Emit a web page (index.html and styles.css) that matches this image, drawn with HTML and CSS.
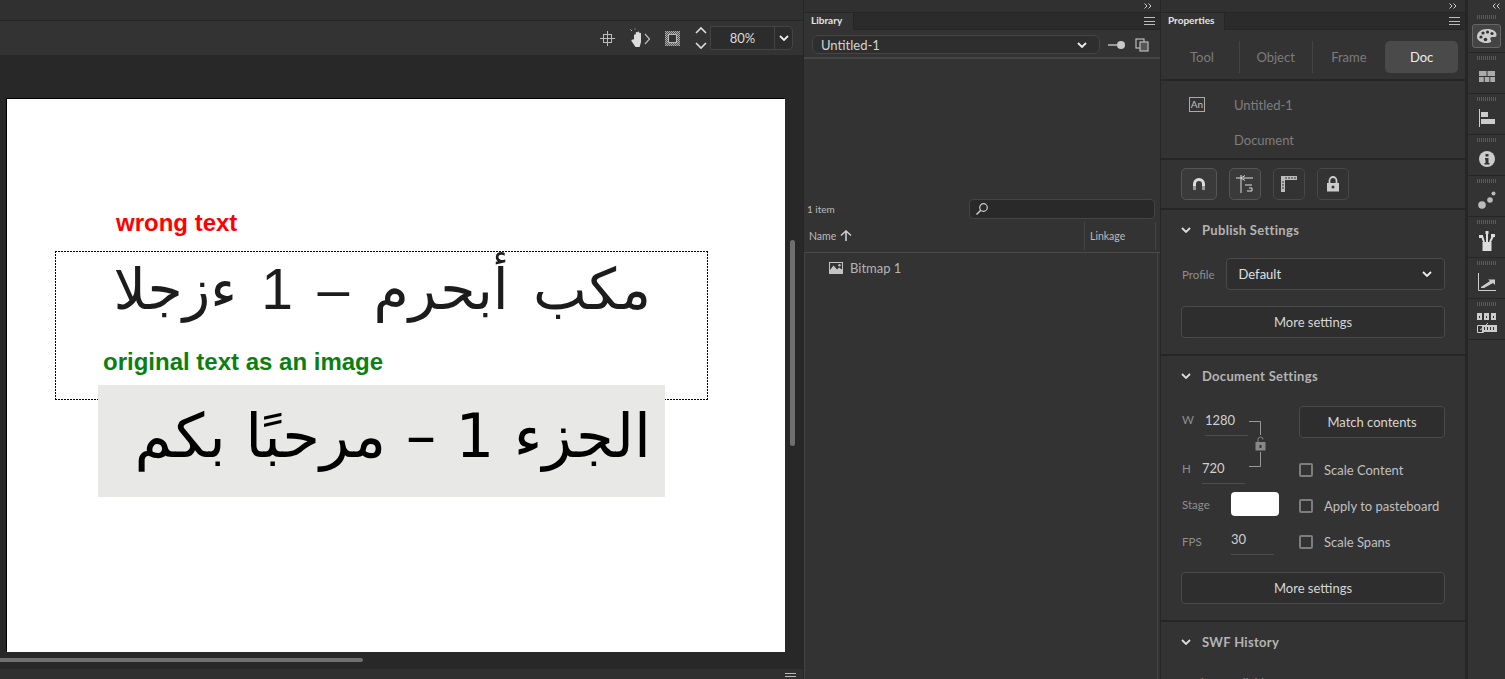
FILE: index.html
```html
<!DOCTYPE html>
<html lang="en">

<head>
    <meta charset="UTF-8">
    <title>Untitled-1</title>
    <link rel="stylesheet" href="styles.css">
</head>

<body>
    <main class="doc">
        <div class="doc-strip"></div>
        <div class="doc-toolbar">
            <svg class="tool-icon" viewBox="0 0 15 15" width="15" height="15"><path d="M7.500 0v15M0 7.500h15" stroke="#bbb" fill="none"/><rect x="3.500" y="3.500" width="8" height="8" stroke="#bbb" fill="none"/></svg>
            <svg class="tool-icon" viewBox="0 0 22 20" width="22" height="20"><path d="M5 11V7a1 1 0 0 1 1.700 0v3V4.500a1 1 0 0 1 1.800 0V10V4a1 1 0 0 1 1.800 0v6V5.500a1 1 0 0 1 1.700 0V14l-1.400 5H6.500L2.500 13c-.5-1 .7-2 1.500-1.200z" fill="#dcdcdc"/><path d="M16 6l4.500 5-4.500 5" stroke="#bbb" stroke-width="1.200" fill="none"/><path d="M3 3L1.500 1.500M6 .5v1" stroke="#bbb"/></svg>
            <svg class="tool-icon" viewBox="0 0 15 15" width="15" height="15">
                <defs><pattern id="hatch" width="2" height="2" patternUnits="userSpaceOnUse"><rect width="2" height="2" fill="#555"/><rect width="1" height="1" fill="#aaa"/><rect x="1" y="1" width="1" height="1" fill="#aaa"/></pattern></defs>
                <rect width="15" height="15" fill="url(#hatch)"/><rect x="3.500" y="3.500" width="8" height="8" fill="#333" stroke="#bbb"/>
            </svg>
            <div class="stepper">
                <svg viewBox="0 0 12 24" width="12" height="24"><path d="M1 7l5-5 5 5M1 17l5 5 5-5" stroke="#ddd" stroke-width="1.600" fill="none"/></svg>
            </div>
            <div class="zoom-box">
                <span class="zoom-value">80%</span>
                <span class="zoom-arrow"><svg viewBox="0 0 10 6" width="10" height="6"><path d="M1 1l4 4 4-4" stroke="#eee" stroke-width="1.800" fill="none"/></svg></span>
            </div>
        </div>
        <div class="canvas">
            <div class="stage">
                <p class="note note-red">wrong text</p>
                <div class="text-box">
                    <p class="wrong-arabic" dir="rtl">مكب أبحرم – 1 ءزجلا</p>
                </div>
                <p class="note note-green">original text as an image</p>
                <div class="picture">
                    <p class="right-arabic" dir="rtl">الجزء 1 – مرحبًا بكم</p>
                </div>
            </div>
            <div class="scroll-v"></div>
            <div class="scroll-h"></div>
        </div>
        <div class="doc-bottom"><span class="menu-lines"></span></div>
    </main>

    <section class="library">
        <div class="strip"><svg class="collapse" viewBox="0 0 8 6" width="8" height="6"><path d="M.5.500L3 3 .5 5.500M4.500.500L7 3 4.500 5.500" stroke="#ccc" fill="none"/></svg></div>
        <div class="tab-bar">
            <span class="tab lib-tab">Library</span>
            <span class="menu-lines"></span>
        </div>
        <div class="lib-doc-row">
            <div class="lib-select">
                <span>Untitled-1</span>
                <svg viewBox="0 0 10 6" width="10" height="6"><path d="M1 1l4 4 4-4" stroke="#eee" stroke-width="1.800" fill="none"/></svg>
            </div>
            <svg viewBox="0 0 18 10" width="18" height="10"><path d="M0 5h9" stroke="#bbb" stroke-width="1.500"/><circle cx="13" cy="5" r="4" fill="#c8c8c8"/></svg>
            <svg viewBox="0 0 14 14" width="14" height="14"><rect x="1" y="1" width="8" height="9" fill="#333" stroke="#bbb" stroke-width="1.200"/><rect x="5" y="4" width="8" height="9" fill="#555" stroke="#bbb" stroke-width="1.200"/></svg>
        </div>
        <div class="lib-preview"></div>
        <div class="lib-count-row">
            <span class="lib-count">1 item</span>
            <div class="lib-search">
                <svg viewBox="0 0 14 14" width="14" height="14"><circle cx="8.500" cy="5.500" r="3.800" stroke="#ccc" stroke-width="1.200" fill="none"/><path d="M5.800 8.200L1.500 12.500" stroke="#ccc" stroke-width="1.500"/></svg>
            </div>
        </div>
        <div class="lib-head">
            <span class="lib-name">Name
                <svg viewBox="0 0 12 11" width="12" height="11"><path d="M6 11V2M1 5.500L6 1l5 4.500" stroke="#ccc" stroke-width="1.600" fill="none"/></svg>
            </span>
            <span class="lib-linkage">Linkage</span>
        </div>
        <div class="lib-list">
            <div class="lib-item">
                <svg viewBox="0 0 14 12" width="14" height="12"><path d="M0 0h14v12H0z" fill="#c4c4c4"/><path d="M1 1h12v6.500L10 5.500 8 7.500 4.500 3.500 1 8z" fill="#333"/><circle cx="10.500" cy="3.200" r="1.200" fill="#c4c4c4"/></svg>
                <span>Bitmap 1</span>
            </div>
        </div>
    </section>

    <section class="props">
        <div class="strip"><svg class="collapse" viewBox="0 0 8 6" width="8" height="6"><path d="M.5.500L3 3 .5 5.500M4.500.500L7 3 4.500 5.500" stroke="#ccc" fill="none"/></svg></div>
        <div class="tab-bar">
            <span class="tab props-tab">Properties</span>
            <span class="menu-lines"></span>
        </div>

        <div class="seg-row">
            <span class="seg seg-tool">Tool</span>
            <span class="seg seg-object">Object</span>
            <span class="seg seg-frame">Frame</span>
            <span class="seg seg-doc">Doc</span>
        </div>

        <div class="block doc-info">
            <span class="an-icon">An</span>
            <div class="doc-names">
                <span>Untitled-1</span>
                <span>Document</span>
            </div>
        </div>

        <div class="block icon-row">
            <span class="icon-btn btn-on"><svg viewBox="0 0 14 14" width="14" height="14"><path d="M2.500 9V7a4.500 4.500 0 0 1 9 0v2" stroke="#ddd" stroke-width="3" fill="none"/><path d="M2.500 9v4M11.500 9v4" stroke="#999" stroke-width="3"/></svg></span>
            <span class="icon-btn btn-on btn-narrow"><svg viewBox="0 0 18 18" width="18" height="18"><path d="M5 0v18M0 3h5M7 3h10M5 3L9 .5M5 3l4 2.500M9 10h7M11 16h5v-3h-3" stroke="#ddd" fill="none"/></svg></span>
            <span class="icon-btn btn-narrow"><svg viewBox="0 0 16 16" width="16" height="16"><path d="M0 0h16v4H4v12H0z" fill="#bbb"/><path d="M5 1v2M8 1v2M11 1v2M14 1v2M1 6h2M1 9h2M1 12h2" stroke="#333"/></svg></span>
            <span class="icon-btn btn-narrow"><svg viewBox="0 0 14 16" width="14" height="16"><path d="M3.500 7V4.500a3.500 3.500 0 0 1 7 0V7" stroke="#ccc" stroke-width="1.800" fill="none"/><path d="M1 7h12v8.500H1z" fill="#ccc"/><circle cx="7" cy="11" r="1.500" fill="#333"/></svg></span>
        </div>

        <div class="block publish">
            <h3 class="sec-title"><svg viewBox="0 0 10 6" width="10" height="6"><path d="M1 1l4 4 4-4" stroke="#ddd" stroke-width="1.800" fill="none"/></svg>Publish Settings</h3>
            <div class="profile-row">
                <span class="label">Profile</span>
                <div class="select">
                    <span>Default</span>
                    <svg viewBox="0 0 10 6" width="10" height="6"><path d="M1 1l4 4 4-4" stroke="#eee" stroke-width="1.800" fill="none"/></svg>
                </div>
            </div>
            <div class="wide-btn">More settings</div>
        </div>

        <div class="block settings">
            <h3 class="sec-title"><svg viewBox="0 0 10 6" width="10" height="6"><path d="M1 1l4 4 4-4" stroke="#ddd" stroke-width="1.800" fill="none"/></svg>Document Settings</h3>
            <div class="settings-grid">
                <div class="size-col">
                    <div class="size-fields">
                        <div class="field-row"><span class="label label-w">W</span><span class="field">1280</span></div>
                        <div class="field-row row-h"><span class="label label-h">H</span><span class="field">720</span></div>
                        <div class="lock-link">
                            <svg viewBox="0 0 18 46" width="18" height="46"><path d="M0 .5h11.500V14M11.500 31v14.500H0" stroke="#999" fill="none"/><path d="M9 21v-2.500a2.500 2.500 0 0 1 5 0" stroke="#888" fill="none"/><path d="M6.500 21h10v8.500h-10z" fill="#888"/><path d="M10.500 24h2v3h-2z" fill="#333"/></svg>
                        </div>
                    </div>
                    <div class="field-row row-stage"><span class="label label-stage">Stage</span><span class="swatch"></span></div>
                    <div class="field-row row-fps"><span class="label label-stage">FPS</span><span class="field">30</span></div>
                </div>
                <div class="opt-col">
                    <div class="small-btn">Match contents</div>
                    <label class="check check-first"><span class="box"></span>Scale Content</label>
                    <label class="check"><span class="box"></span>Apply to pasteboard</label>
                    <label class="check"><span class="box"></span>Scale Spans</label>
                </div>
            </div>
            <div class="wide-btn btn-last">More settings</div>
        </div>

        <div class="history">
            <h3 class="sec-title"><svg viewBox="0 0 10 6" width="10" height="6"><path d="M1 1l4 4 4-4" stroke="#ddd" stroke-width="1.800" fill="none"/></svg>SWF History</h3>
            <p class="no-logs">No logs available</p>
        </div>
    </section>

    <aside class="dock">
        <div class="dock-strip"><svg class="collapse" viewBox="0 0 8 6" width="8" height="6"><path d="M3.500.500L1 3l2.500 2.500M7.500.500L5 3l2.500 2.500" stroke="#ccc" fill="none"/></svg></div>
        <div class="dock-cell">
            <span class="dock-btn"><svg viewBox="0 0 20 16" width="20" height="16"><path d="M10 1c6 0 10 2.500 9.500 6.500-.3 2-3 1.500-4.500 1.500-2 0-2 2-1 3.500.8 1.500-1 2.500-4 2.500C4 15 0 12.500 0 8.500S4 1 10 1z" fill="#ccc"/><circle cx="4" cy="9" r="1.600" fill="#333"/><circle cx="6" cy="5" r="1.600" fill="#333"/><circle cx="10.500" cy="4" r="1.600" fill="#333"/><circle cx="15" cy="5.500" r="1.600" fill="#333"/><circle cx="8.500" cy="11.500" r="1.800" fill="#333"/></svg></span>
        </div>
        <div class="dock-cell"><svg viewBox="0 0 16 11" width="16" height="11"><path d="M0 0h7.500v5H0zM8.500 0H16v5H8.500zM0 6h4.700v5H0zM5.700 6h4.700v5H5.700zM11.300 6H16v5h-4.700z" fill="#aaa"/></svg></div>
        <div class="dock-cell"><svg viewBox="0 0 16 18" width="16" height="18"><path d="M.5 0v18" stroke="#ccc"/><path d="M2 3h7v5H2zM2 10h14v5H2z" fill="#ccc"/></svg></div>
        <div class="dock-cell"><svg viewBox="0 0 16 16" width="16" height="16"><circle cx="8" cy="8" r="8" fill="#ccc"/><path d="M6.500 3h3v2.500h-3zM6 7h3.500v5h1v1.500h-5V12h1V8.500H6z" fill="#333"/></svg></div>
        <div class="dock-cell"><svg viewBox="0 0 18 18" width="18" height="18"><circle cx="4" cy="14" r="3.800" fill="#bbb"/><circle cx="12" cy="9" r="2.800" fill="#bbb"/><circle cx="15.500" cy="2.500" r="2" fill="#bbb"/></svg></div>
        <div class="dock-cell"><svg viewBox="0 0 16 20" width="16" height="20"><path d="M3.500 11h9v9h-9z" fill="#ddd"/><path d="M5 11L3 5M8 11V2M11 11l3-6" stroke="#ddd" stroke-width="2"/><path d="M0 4h4v3H0zM12 3h4v3h-4zM6.500 0h3v3h-3z" fill="#ddd"/></svg></div>
        <div class="dock-cell"><svg viewBox="0 0 18 18" width="18" height="18"><path d="M.5 0v17.500H18" stroke="#ccc" fill="none"/><path d="M3 14l9-6-2-1.500h7V12l-2-2-9 5H3z" fill="#ccc"/></svg></div>
        <div class="dock-cell"><svg viewBox="0 0 20 20" width="20" height="20"><path d="M0 0h5v7H0zM7 0h5v7H7zM14 0h5v7h-5zM5 12h15v7H5z" fill="#ccc"/><path d="M.5 12.500h6v7h-6zM3 17l3-2 5-5" stroke="#ccc" fill="none"/><path d="M2 3h1v2H2zM9 3h1v2H9zM16 3h1v2h-1z" fill="#333"/><path d="M7 14h1v3H7zM10 14h1v3h-1zM13 14h1v3h-1zM16 14h1v3h-1z" fill="#333"/></svg></div>
    </aside>
</body>

</html>
```

FILE: styles.css
```css
* {
    box-sizing: border-box;
}

body {
    margin: 0;
    display: flex;
    height: 679px;
    overflow: hidden;
    background: #262626;
    font-family: 'Lato', 'Noto Sans', sans-serif;
    font-size: 13px;
    color: #d6d6d6;
}

p,
h3 {
    margin: 0;
}

/* document area */
.doc {
    width: 803px;
    display: flex;
    flex-direction: column;
    flex-shrink: 0;
}

.doc-strip {
    height: 21px;
    background: #303030;
    border-bottom: 1px solid #262626;
}

.doc-toolbar {
    height: 34px;
    background: #333;
    display: flex;
    align-items: center;
    padding-right: 10px;
    justify-content: flex-end;
}

.tool-icon {
    margin-right: 14px;
}

.tool-icon:nth-child(3) {
    margin-right: 15px;
}

.stepper {
    display: flex;
    margin-right: 3px;
}

.zoom-box {
    display: flex;
    width: 83px;
    height: 24px;
    border: 1px solid #444;
    border-radius: 0 5px 5px 0;
    background: #2c2c2c;
}

.zoom-value {
    flex: 1;
    text-align: center;
    line-height: 22px;
    color: #ddd;
    border-right: 1px solid #444;
}

.zoom-arrow {
    width: 17px;
    display: flex;
    align-items: center;
    justify-content: center;
}

.canvas {
    position: relative;
    flex: 1;
    background: #282828;
    padding: 44px 0 0 7px;
}

.stage {
    position: relative;
    width: 778px;
    height: 553px;
    background: #fff;
    box-shadow: -1px -1px 0 #000;
}

.note {
    position: absolute;
    font-family: 'Liberation Sans', Arial, sans-serif;
    font-weight: bold;
    white-space: nowrap;
}

.note-red {
    left: 109px;
    top: 110px;
    font-size: 24px;
    color: #f00;
}

.note-green {
    left: 96px;
    top: 249px;
    font-size: 24px;
    color: #0a8010;
}

.text-box {
    position: absolute;
    left: 48px;
    top: 152px;
    width: 653px;
    height: 149px;
    background:
        repeating-linear-gradient(90deg, #000 0 2px, transparent 2px 3px) top / 100% 1px no-repeat,
        repeating-linear-gradient(90deg, #000 0 2px, transparent 2px 3px) bottom / 100% 1px no-repeat,
        repeating-linear-gradient(0deg, #000 0 2px, transparent 2px 3px) left / 1px 100% no-repeat,
        repeating-linear-gradient(0deg, #000 0 2px, transparent 2px 3px) right / 1px 100% no-repeat;
}

.wrong-arabic {
    position: absolute;
    right: 57px;
    top: 3px;
    font-family: 'Liberation Sans', 'DejaVu Sans', sans-serif;
    font-size: 57px;
    line-height: 70px;
    word-spacing: 8.500px;
    color: #1c1c1c;
    white-space: nowrap;
}

.picture {
    position: absolute;
    left: 91px;
    top: 286px;
    width: 567px;
    height: 112px;
    background: #e8e8e6;
}

.right-arabic {
    position: absolute;
    right: 14px;
    top: 8px;
    font-family: 'DejaVu Sans', sans-serif;
    font-size: 61px;
    line-height: 85px;
    color: #000;
    white-space: nowrap;
}

.scroll-v {
    position: absolute;
    left: 790px;
    top: 185px;
    width: 5px;
    height: 206px;
    border-radius: 3px;
    background: #6f6f6f;
}

.scroll-h {
    position: absolute;
    left: 0;
    top: 603px;
    width: 363px;
    height: 4px;
    border-radius: 0 2px 2px 0;
    background: #707070;
}

.doc-bottom {
    height: 10px;
    background: #303030;
    display: flex;
    justify-content: flex-end;
    align-items: flex-end;
    padding-right: 7px;
}

.doc-bottom .menu-lines {
    margin: 0;
    height: 6px;
    border-bottom: 0;
}

.menu-lines {
    display: block;
    width: 11px;
    height: 8px;
    margin-right: 5px;
    border-top: 1px solid #bbb;
    border-bottom: 1px solid #bbb;
    background: linear-gradient(#bbb, #bbb) center / 100% 1px no-repeat;
}

/* shared panel bits */
.strip {
    height: 13px;
    background: #303030;
    border-bottom: 1px solid #262626;
    display: flex;
    justify-content: flex-end;
    padding-right: 8px;
}

.collapse {
    display: block;
    margin-top: 3px;
}

.tab-bar {
    height: 17px;
    display: flex;
    align-items: center;
    justify-content: space-between;
    background: #2b2b2b;
    border-bottom: 1px solid #262626;
}

.tab {
    height: 17px;
    background: #333;
    border-right: 1px solid #262626;
    font-size: 10px;
    font-weight: bold;
    line-height: 15px;
    color: #e4e4e4;
    padding-left: 7px;
}

.lib-tab {
    width: 50px;
}

.props-tab {
    width: 64px;
}

.label {
    font-size: 11.500px;
    color: #8e8e8e;
}

/* library */
.library {
    width: 356px;
    margin-left: 1px;
    display: flex;
    flex-direction: column;
    flex-shrink: 0;
    background: #333;
}

.library > *,
.props > * {
    flex-shrink: 0;
}

.lib-doc-row {
    height: 29px;
    display: flex;
    align-items: center;
    padding: 2px 0 0 8px;
    gap: 9px;
    border-bottom: 2px solid #454545;
}

.lib-select {
    width: 288px;
    height: 19px;
    margin-right: -1px;
    border: 1px solid #444;
    border-radius: 6px;
    background: #2e2e2e;
    display: flex;
    align-items: center;
    justify-content: space-between;
    padding: 0 12px 0 8px;
    color: #d4d4d4;
}

.lib-preview {
    height: 139px;
}

.lib-count-row {
    height: 22px;
    display: flex;
    align-items: center;
    justify-content: space-between;
    padding: 0 5px 0 3px;
}

.lib-count {
    font-size: 10px;
    color: #bbb;
}

.lib-search {
    width: 186px;
    height: 20px;
    border: 1px solid #444;
    border-radius: 4px;
    background: #292929;
    padding: 2px 0 0 5px;
}

.lib-head {
    height: 33px;
    display: flex;
    align-items: center;
    justify-content: space-between;
    font-size: 10.500px;
    color: #bbb;
    border-bottom: 1px solid #4a4a4a;
}

.lib-name {
    padding-left: 5px;
}

.lib-name svg {
    vertical-align: -1px;
    margin-left: 1px;
}

.lib-linkage {
    width: 72px;
    height: 28px;
    line-height: 28px;
    padding-left: 5px;
    border-left: 1px solid #444;
    border-right: 1px solid #444;
    margin-right: 4px;
}

.lib-list {
    flex: 1;
    border-left: 1px solid #444;
    border-right: 1px solid #444;
    margin-right: 2px;
}

.lib-item {
    display: flex;
    align-items: center;
    gap: 7px;
    height: 30px;
    padding-left: 24px;
    color: #b4b4b4;
}

/* properties */
.props {
    width: 304px;
    margin-left: 1px;
    display: flex;
    flex-direction: column;
    flex-shrink: 0;
    background: #333;
}

.seg-row {
    height: 51px;
    display: flex;
    align-items: center;
    padding: 4px 7px 0 0;
    border-bottom: 2px solid #262626;
}

.seg {
    height: 32px;
    line-height: 32px;
    text-align: center;
    color: #7c7c7c;
}

.seg-tool {
    width: 79px;
    padding-left: 4px;
    border-right: 1px solid #444;
}

.seg-object {
    width: 73px;
    border-right: 1px solid #444;
}

.seg-frame {
    width: 73px;
}

.seg-doc {
    width: 73px;
    background: #4a4a4a;
    border-radius: 5px;
    color: #eee;
}

.block {
    border-bottom: 2px solid #262626;
}

.doc-info {
    height: 79px;
    display: flex;
    padding: 16px 0 0 28px;
}

.an-icon {
    width: 16px;
    height: 15px;
    border: 1px solid #aaa;
    font-size: 10px;
    line-height: 13px;
    text-align: center;
    color: #c0c0c0;
}

.doc-names {
    display: flex;
    flex-direction: column;
    gap: 19px;
    margin: 0 0 0 29px;
    color: #7e7e7e;
    line-height: 16px;
}

.icon-row {
    height: 50px;
    display: flex;
    gap: 12px;
    padding: 8px 0 0 20px;
}

.icon-btn {
    width: 32px;
    height: 32px;
    border: 1px solid #484848;
    border-radius: 5px;
    display: flex;
    align-items: center;
    justify-content: center;
}

.icon-btn:first-child {
    width: 36px;
}

.btn-on {
    background: #3a3a3a;
    border-color: #555;
}

.sec-title {
    display: flex;
    align-items: center;
    gap: 11px;
    font-size: 13px;
    font-weight: bold;
    letter-spacing: 0.3px;
    color: #b4b4b4;
    padding-left: 20px;
    line-height: 16px;
}

.publish {
    height: 146px;
    padding-top: 12px;
}

.profile-row {
    display: flex;
    align-items: center;
    margin: 20px 20px 0 21px;
    gap: 11px;
}

.select {
    flex: 1;
    height: 32px;
    border: 1px solid #4a4a4a;
    border-radius: 4px;
    background: #2e2e2e;
    display: flex;
    align-items: center;
    justify-content: space-between;
    padding: 0 12px;
    color: #e0e0e0;
}

.wide-btn,
.small-btn {
    height: 32px;
    line-height: 30px;
    text-align: center;
    border: 1px solid #4a4a4a;
    border-radius: 4px;
    background: #2e2e2e;
    color: #d6d6d6;
}

.wide-btn {
    margin: 16px 20px 0;
}

.settings {
    height: 266px;
    padding-top: 12px;
}

.settings-grid {
    display: flex;
    margin: 22px 20px 0 21px;
}

.size-col {
    width: 117px;
}

.size-fields {
    position: relative;
}

.field-row {
    display: flex;
    align-items: center;
    height: 32px;
}

.row-h {
    margin-top: 16px;
}

.label-w {
    width: 23px;
    margin-top: -5px;
}

.label-h {
    width: 20px;
    margin-top: -4px;
}

.label-stage {
    width: 49px;
}

.field {
    width: 43px;
    height: 28px;
    line-height: 24px;
    border-bottom: 1px solid #4e4e4e;
    color: #d0d0d0;
}

.lock-link {
    position: absolute;
    left: 67px;
    top: 15px;
}

.row-stage {
    margin-top: 2px;
}

.swatch {
    width: 48px;
    height: 24px;
    background: #fff;
    border-radius: 4px;
}

.row-fps {
    margin-top: 5px;
}

.opt-col {
    flex: 1;
}

.check {
    display: flex;
    align-items: center;
    gap: 11px;
    height: 36px;
    color: #c0c0c0;
}

.check-first {
    margin-top: 14px;
}

.box {
    width: 14px;
    height: 14px;
    border: 2px solid #7d7d7d;
    border-radius: 2px;
}

.btn-last {
    margin-top: 12px;
}

.history {
    padding-top: 12px;
}

.no-logs {
    margin: 25px 0 0 21px;
    font-size: 12px;
    color: #8e8e8e;
}

/* icon dock */
.dock {
    width: 37px;
    margin-left: 3px;
    flex-shrink: 0;
    background: #333;
}

.dock-strip {
    height: 12px;
    display: flex;
    justify-content: flex-end;
    padding-right: 5px;
}

.dock-cell {
    position: relative;
    height: 41px;
    display: flex;
    align-items: center;
    justify-content: center;
    padding-top: 7px;
    border-bottom: 1px solid #262626;
}

.dock-cell::before {
    content: '';
    position: absolute;
    left: 9px;
    top: 3px;
    width: 20px;
    height: 4px;
    background: repeating-linear-gradient(90deg, #5a5a5a 0 1px, transparent 1px 2px);
}

.dock-btn {
    width: 29px;
    height: 24px;
    border: 1px solid #666;
    border-radius: 3px;
    background: #444;
    display: flex;
    align-items: center;
    justify-content: center;
}
```
